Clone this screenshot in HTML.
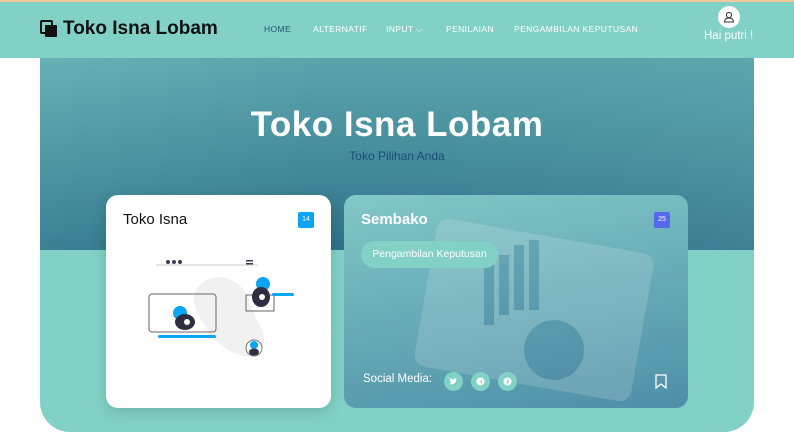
<!DOCTYPE html>
<html><head><meta charset="utf-8"><style>
*{margin:0;padding:0;box-sizing:border-box}
body{width:794px;height:432px;overflow:hidden;background:#fff;font-family:"Liberation Sans",sans-serif;position:relative}
.top{position:absolute;left:0;top:0;width:794px;height:2px;background:#f3c99c}
.hdr{position:absolute;left:0;top:2px;width:794px;height:56px;background:#81d1c7}
.logo{position:absolute;left:40px;top:18px;font-size:19px;font-weight:bold;color:#111;display:flex;align-items:center;gap:5px}
.nav{position:absolute;top:24px;font-size:8.5px;color:#fff;letter-spacing:.4px}
.user{position:absolute;left:718px;top:6px;width:22px;height:22px;border-radius:50%;background:#fff}
.hai{position:absolute;left:704px;top:30px;color:#fff;font-size:11.5px}
.hero{position:absolute;left:40px;top:58px;width:714px;height:192px;background:linear-gradient(170deg,#66b2b6 0%,#3e8596 55%,#1d5878 100%)}
.hero::after{content:"";position:absolute;inset:0;background:linear-gradient(90deg,rgba(255,255,255,0) 40%,rgba(130,205,200,.35) 100%)}
.low{position:absolute;left:40px;top:250px;width:714px;height:182px;background:#81d1c7;border-radius:0 0 30px 30px}
h1{position:absolute;left:0;width:794px;top:105px;text-align:center;color:#fff;font-size:35px;font-weight:bold;z-index:2;letter-spacing:.5px}
.sub{position:absolute;left:0;width:794px;top:149px;text-align:center;color:#1b4f72;font-size:12px;z-index:2}
.c1{position:absolute;left:106px;top:195px;width:225px;height:213px;background:#fff;border-radius:12px;box-shadow:0 4px 14px rgba(0,0,0,.15);z-index:2}
.c2{position:absolute;left:344px;top:195px;width:344px;height:213px;border-radius:12px;background:linear-gradient(170deg,#82c8c6 0%,#6aaeb8 45%,#4e8fa8 100%);overflow:hidden;z-index:2}
.badge{position:absolute;width:16px;height:16px;border-radius:2px;color:#fff;font-size:7px;text-align:center;line-height:16px}
.sb{width:19px;height:19px;border-radius:50%;background:#81d1c7;position:absolute;top:372px;z-index:3}
.sb svg{display:block;margin:5px}
</style></head><body>
<div class="top"></div>
<div class="hdr"></div>
<div class="logo"><svg width="18" height="18" viewBox="0 0 18 18"><rect x="1" y="1" width="11" height="12" rx="1" fill="none" stroke="#111" stroke-width="2"/><rect x="5" y="5" width="12" height="12" rx="1" fill="#111"/></svg>Toko Isna Lobam</div>
<div class="nav" style="left:264px;color:#1d5570">HOME</div>
<div class="nav" style="left:313px">ALTERNATIF</div>
<div class="nav" style="left:386px">INPUT ⌵</div>
<div class="nav" style="left:446px">PENILAIAN</div>
<div class="nav" style="left:514px">PENGAMBILAN KEPUTUSAN</div>
<div class="user"><svg width="22" height="22" viewBox="0 0 22 22"><circle cx="11" cy="9" r="2.6" fill="none" stroke="#333" stroke-width="1"/><path d="M6.5 16c0-3 2-4 4.5-4s4.5 1 4.5 4z" fill="none" stroke="#333" stroke-width="1"/></svg></div>
<div class="hai">Hai putri !</div>
<div class="hero"></div>
<div class="low"></div>
<h1>Toko Isna Lobam</h1>
<div class="sub">Toko Pilihan Anda</div>
<div class="c1">
<div style="position:absolute;left:17px;top:16px;font-size:15px;color:#111">Toko Isna</div>
<div class="badge" style="left:192px;top:17px;background:#0aa5f3">14</div>
<svg style="position:absolute;left:40px;top:60px" width="150" height="110" viewBox="0 0 150 110">
<path d="M60 25c20-10 40 5 45 25s20 30 10 45-40 0-50-15-30-40-5-55z" fill="#f1f1f1"/>
<line x1="10" y1="10" x2="112" y2="10" stroke="#ccc"/>
<circle cx="22" cy="7" r="2" fill="#3f3d56"/><circle cx="28" cy="7" r="2" fill="#3f3d56"/><circle cx="34" cy="7" r="2" fill="#3f3d56"/>
<rect x="100" y="5" width="7" height="1.5" fill="#3f3d56"/><rect x="100" y="8" width="7" height="1.5" fill="#3f3d56"/>
<rect x="3" y="39" width="67" height="38" rx="3" fill="none" stroke="#666"/>
<rect x="12" y="80" width="58" height="3" rx="1.5" fill="#0aa5f3"/>
<circle cx="34" cy="58" r="7" fill="#0aa5f3"/><ellipse cx="39" cy="67" rx="10" ry="8" fill="#2f2e41"/><circle cx="41" cy="67" r="3" fill="#fff"/>
<rect x="100" y="40" width="28" height="16" fill="none" stroke="#666"/>
<circle cx="117" cy="29" r="7" fill="#0aa5f3"/><ellipse cx="115" cy="42" rx="9" ry="10" fill="#2f2e41"/><circle cx="116" cy="42" r="3" fill="#fff"/>
<rect x="126" y="38" width="22" height="3" rx="1.5" fill="#0aa5f3"/>
<circle cx="108" cy="93" r="8" fill="#fff" stroke="#777"/><circle cx="108" cy="90" r="4" fill="#0aa5f3"/><ellipse cx="108" cy="97" rx="5" ry="3.5" fill="#2f2e41"/>
</svg>
</div>
<div class="c2">
<svg style="position:absolute;left:60px;top:0px;opacity:.18" width="280" height="213" viewBox="0 0 280 213"><rect x="20" y="40" width="220" height="150" rx="12" fill="#e6eef2" transform="rotate(10 130 115)"/><circle cx="150" cy="155" r="30" fill="#3b6e96"/><g fill="#2b5a8a"><rect x="80" y="70" width="10" height="60"/><rect x="95" y="60" width="10" height="60"/><rect x="110" y="50" width="10" height="65"/><rect x="125" y="45" width="10" height="70"/></g></svg>
<div style="position:absolute;left:17px;top:16px;font-size:15px;font-weight:bold;color:#fff">Sembako</div>
<div class="badge" style="left:310px;top:17px;background:#5569ef">25</div>
<div style="position:absolute;left:17px;top:46px;width:137px;height:27px;border-radius:14px;background:#81d1c7;color:#fff;font-size:10.5px;text-align:center;line-height:27px">Pengambilan Keputusan</div>
<div style="position:absolute;left:19px;top:178px;color:#fff;font-size:11.5px">Social Media:</div>
<svg style="position:absolute;left:311px;top:179px" width="12" height="15" viewBox="0 0 12 15"><path d="M1 1h10v13l-5-4-5 4z" fill="none" stroke="#fff" stroke-width="1.3"/></svg>
</div>
<div class="sb" style="left:444px"><svg width="9" height="9" viewBox="0 0 10 10"><path d="M1 8c3 1 7-1 7-5l1-1-1 .2C7 1 5 1 5 3 3 3 2 2 1 1c0 1 0 2 1 3H1c0 1 1 2 2 2-1 1-2 1-2 1z" fill="#fff"/></svg></div>
<div class="sb" style="left:471px"><svg width="9" height="9" viewBox="0 0 10 10"><circle cx="5" cy="5" r="4.5" fill="#fff"/><path d="M5.5 10V6h-1V5h1V4c0-1 .5-1.5 1.5-1.5V3.5c-.5 0-.7.2-.7.6V5H7.2l-.2 1H6.3v4z" fill="#81d1c7"/></svg></div>
<div class="sb" style="left:498px"><svg width="9" height="9" viewBox="0 0 10 10"><circle cx="5" cy="5" r="4.5" fill="#fff"/><path d="M4.5 3c1.5-.5 2.5.5 2 2-.3 1-1.3 1-1.6.5L4.3 8" fill="none" stroke="#81d1c7" stroke-width="1"/></svg></div>
</body></html>
